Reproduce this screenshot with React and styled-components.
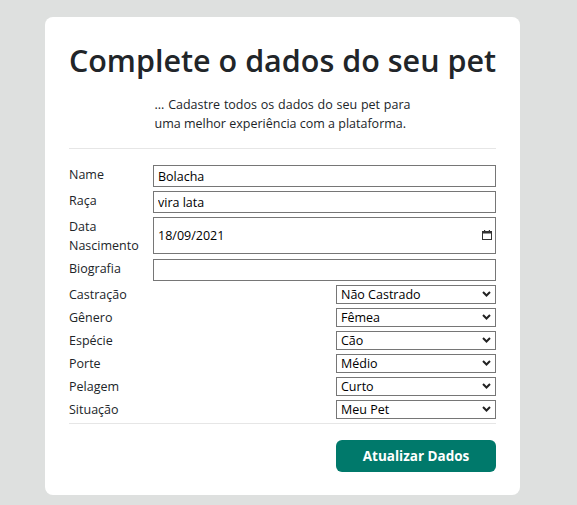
import React from "react";
import styled, { createGlobalStyle } from "styled-components";

const Global = createGlobalStyle`
  html, body { margin: 0; padding: 0; background: #dee0df; }
  body { font-family: "Open Sans", "Noto Sans", sans-serif; color: #212529; }
  * { box-sizing: border-box; }
`;

const Page = styled.div`
  padding: 17px 0 11px 45px;
`;

const Card = styled.div`
  width: 475px;
  background: #fff;
  border-radius: 8px;
  padding: 25px 24px 23px;
  display: flex;
  flex-direction: column;
`;

const Title = styled.h1`
  margin: 0 -4px;
  text-align: center;
  white-space: nowrap;
  font-size: 30.5px;
  font-weight: 600;
  line-height: 36px;
  color: #212529;
`;

const Subtitle = styled.p`
  margin: 17px auto 0;
  width: 256px;
  font-size: 12.5px;
  line-height: 19px;
  text-align: justify;
  color: #212529;
`;

const Rule = styled.hr`
  margin: ${(p) => p.$top || 0}px 0 0;
  border: 0;
  border-top: 1px solid #e6e6e6;
  height: 0;
`;

const Form = styled.form`
  display: flex;
  flex-direction: column;
  gap: 4px;
  margin-top: 16px;
`;

const Row = styled.div`
  display: grid;
  grid-template-columns: 84px 1fr;
  align-items: start;
`;

const Label = styled.label`
  font-size: 12.5px;
  line-height: 19px;
  color: #212529;
  width: ${(p) => (p.$narrow ? "70px" : "auto")};
`;

const TextInput = styled.input`
  display: block;
  width: 100%;
  height: ${(p) => p.$h || 22}px;
  border: 1px solid #767676;
  border-radius: 0;
  padding: 0 4px;
  font-family: inherit;
  font-size: 12.5px;
  color: #000;
  background: #fff;
  outline: none;
`;

const DateField = styled.div`
  position: relative;
`;

const CalIcon = styled.svg`
  position: absolute;
  right: 4px;
  top: 13px;
  width: 10px;
  height: 10px;
`;

const SelectRow = styled.div`
  display: flex;
  justify-content: space-between;
  align-items: start;
`;

const SelectWrap = styled.div`
  position: relative;
  width: 160px;
`;

const Select = styled.select`
  display: block;
  appearance: none;
  -webkit-appearance: none;
  width: 100%;
  height: 19px;
  border: 1px solid #767676;
  border-radius: 0;
  padding: 0 0 0 4px;
  font-family: inherit;
  font-size: 12.5px;
  line-height: 17px;
  color: #000;
  background: #fff;
  outline: none;
`;

const Chevron = styled.svg`
  position: absolute;
  right: 5px;
  top: 6px;
  width: 9px;
  height: 6px;
  pointer-events: none;
`;

const Footer = styled.div`
  display: flex;
  justify-content: flex-end;
  margin-top: 16px;
`;

const Button = styled.button`
  width: 160px;
  height: 32px;
  border: 0;
  border-radius: 6px;
  background: #00796b;
  color: #fff;
  font-family: inherit;
  font-weight: 700;
  font-size: 13.5px;
  cursor: pointer;
`;

const selects = [
  ["Castração", "Não Castrado", ["Não Castrado", "Castrado"]],
  ["Gênero", "Fêmea", ["Fêmea", "Macho"]],
  ["Espécie", "Cão", ["Cão", "Gato"]],
  ["Porte", "Médio", ["Pequeno", "Médio", "Grande"]],
  ["Pelagem", "Curto", ["Curto", "Médio", "Longo"]],
  ["Situação", "Meu Pet", ["Meu Pet", "Adoção", "Perdido"]],
];

function SelectField({ label, value, options }) {
  return (
    <SelectRow>
      <Label>{label}</Label>
      <SelectWrap>
        <Select defaultValue={value}>
          {options.map((o) => (
            <option key={o}>{o}</option>
          ))}
        </Select>
        <Chevron viewBox="0 0 9 6">
          <path d="M1 1 L4.5 4.5 L8 1" fill="none" stroke="#222" strokeWidth="2" />
        </Chevron>
      </SelectWrap>
    </SelectRow>
  );
}

export default function App() {
  return (
    <>
      <Global />
      <Page>
        <Card>
          <Title>Complete o dados do seu pet</Title>
          <Subtitle>
            ... Cadastre todos os dados do seu pet para uma melhor experiência com a plataforma.
          </Subtitle>
          <Rule $top={15} />
          <Form onSubmit={(e) => e.preventDefault()}>
            <Row>
              <Label>Name</Label>
              <TextInput defaultValue="Bolacha" />
            </Row>
            <Row>
              <Label>Raça</Label>
              <TextInput defaultValue="vira lata" />
            </Row>
            <Row>
              <Label $narrow>Data Nascimento</Label>
              <DateField>
                <TextInput $h={37} defaultValue="18/09/2021" />
                <CalIcon viewBox="0 0 10 10">
                  <rect x="0.5" y="1.5" width="9" height="8" fill="none" stroke="#333" strokeWidth="1" />
                  <rect x="0.5" y="1.5" width="9" height="2" fill="#333" />
                  <rect x="2" y="0" width="1.2" height="2" fill="#333" />
                  <rect x="6.8" y="0" width="1.2" height="2" fill="#333" />
                </CalIcon>
              </DateField>
            </Row>
            <Row>
              <Label>Biografia</Label>
              <TextInput />
            </Row>
            {selects.map(([l, v, o]) => (
              <SelectField key={l} label={l} value={v} options={o} />
            ))}
          </Form>
          <Rule $top={4} />
          <Footer>
            <Button type="button">Atualizar Dados</Button>
          </Footer>
        </Card>
      </Page>
    </>
  );
}
